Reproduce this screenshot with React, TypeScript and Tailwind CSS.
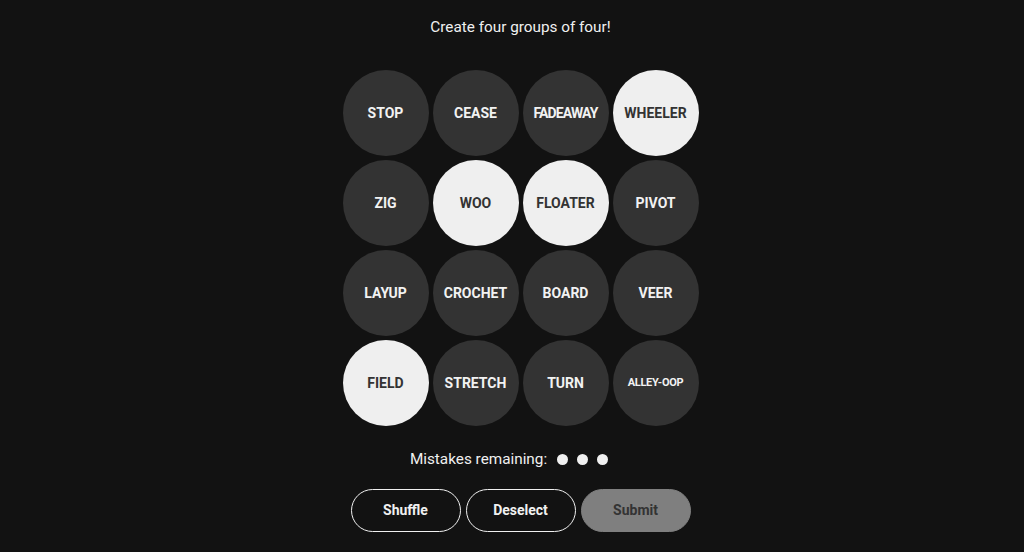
const words = [
  { t: 'STOP', on: false },
  { t: 'CEASE', on: false },
  { t: 'FADEAWAY', on: false, tight: true },
  { t: 'WHEELER', on: true },
  { t: 'ZIG', on: false },
  { t: 'WOO', on: true },
  { t: 'FLOATER', on: true },
  { t: 'PIVOT', on: false },
  { t: 'LAYUP', on: false },
  { t: 'CROCHET', on: false },
  { t: 'BOARD', on: false },
  { t: 'VEER', on: false },
  { t: 'FIELD', on: true },
  { t: 'STRETCH', on: false },
  { t: 'TURN', on: false },
  { t: 'ALLEY-OOP', on: false, small: true },
];

const App = () => {
  return (
    <div className="min-h-[552px] w-full bg-[#121212] font-['Roboto','Liberation_Sans',sans-serif]">
      <div className="flex flex-col items-center pt-[16px]">
        <p className="ml-[17px] text-[15.3px] leading-[22px] text-[#f0f0f0]">Create four groups of four!</p>

        <div className="ml-[17px] mt-[32px] grid grid-cols-4 gap-[4px]">
          {words.map((w) => (
            <button
              key={w.t}
              className={`flex h-[86px] w-[86px] items-center justify-center rounded-full font-bold ${
                w.on ? 'bg-[#efefef] text-[#333333]' : 'bg-[#333333] text-[#f2f2f2]'
              } ${w.small ? 'text-[11px] tracking-[-0.3px]' : 'text-[14px]'} ${w.tight ? 'tracking-[-0.9px]' : ''}`}
            >
              {w.t}
            </button>
          ))}
        </div>

        <div className="ml-[-6px] mt-[22px] flex items-center gap-[10px]">
          <span className="text-[15.3px] leading-[22px] text-[#f0f0f0]">Mistakes remaining:</span>
          <div className="flex items-center gap-[9px]">
            <span className="h-[11px] w-[11px] rounded-full bg-[#f0f0f0]" />
            <span className="h-[11px] w-[11px] rounded-full bg-[#f0f0f0]" />
            <span className="h-[11px] w-[11px] rounded-full bg-[#f0f0f0]" />
          </div>
        </div>

        <div className="ml-[17px] mt-[19px] flex gap-[5px]">
          <button className="h-[43px] w-[110px] rounded-full border border-[#f0f0f0] text-[14px] font-bold text-[#f0f0f0]">
            Shuffle
          </button>
          <button className="h-[43px] w-[110px] rounded-full border border-[#f0f0f0] text-[14px] font-bold text-[#f0f0f0]">
            Deselect
          </button>
          <button className="h-[43px] w-[110px] rounded-full border border-[#7f7f7f] bg-[#7f7f7f] text-[14px] font-bold text-[#333333]">
            Submit
          </button>
        </div>
      </div>
    </div>
  );
};

export default App;
